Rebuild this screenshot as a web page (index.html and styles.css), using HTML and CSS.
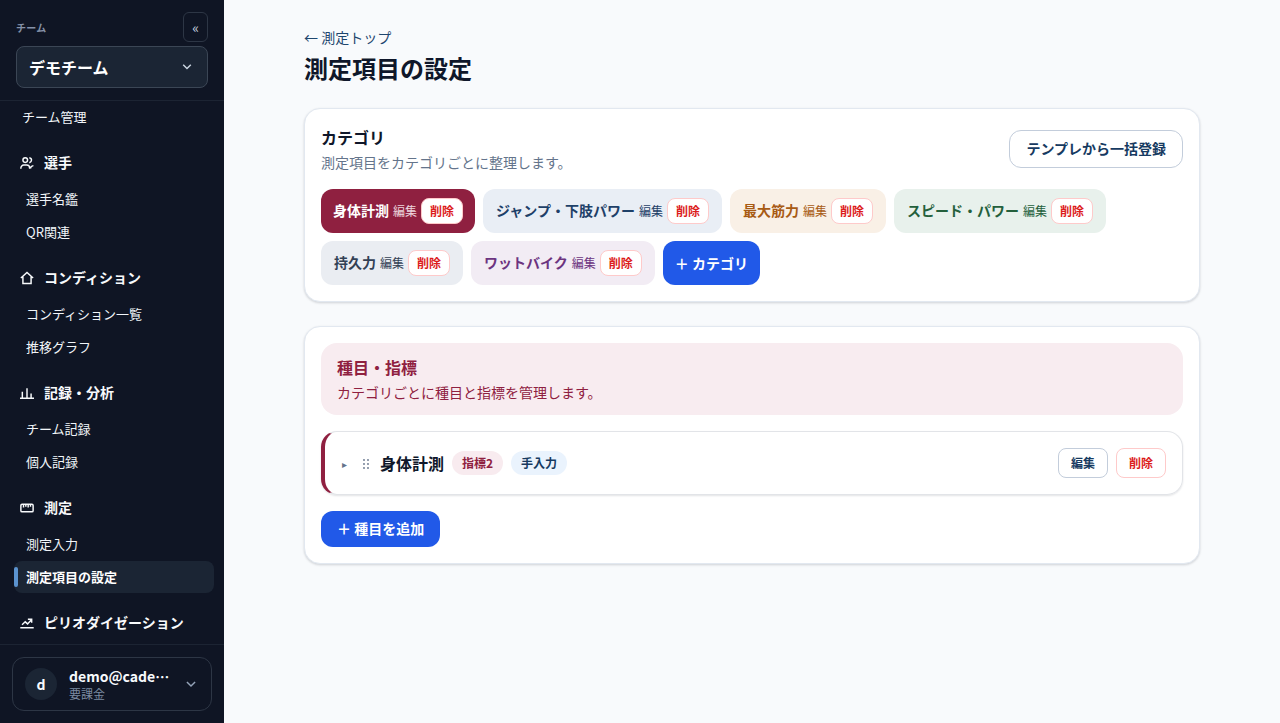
FILE: index.html
```html
<!DOCTYPE html>
<html lang="ja">
<head>
    <meta charset="UTF-8">
    <meta name="viewport" content="width=device-width, initial-scale=1.0">
    <title>測定項目の設定</title>
    <link rel="stylesheet" href="styles.css">
</head>
<body>
    <aside class="sidebar">
        <div class="sidebar-header">
            <div class="team-row">
                <span class="team-label">チーム</span>
                <button class="collapse-btn">«</button>
            </div>
            <button class="team-select">
                デモチーム
                <svg class="chevron" viewBox="0 0 24 24"><path d="m5.500 8 6.500 6.500L18.500 8"/></svg>
            </button>
        </div>

        <nav class="nav">
            <a class="nav-item nav-top" href="#">チーム管理</a>

            <div class="nav-group">
                <div class="nav-heading">
                    <svg viewBox="0 0 24 24"><circle cx="9" cy="7" r="4"/><path d="M1.500 22v-1.500a5 5 0 0 1 5-5h5a5 5 0 0 1 5 5V22M16 3c5 1 5 7 0 8.500M18 21.500c0-3 1-4.500 5-5"/></svg>
                    <span>選手</span>
                </div>
                <a class="nav-item" href="#">選手名鑑</a>
                <a class="nav-item" href="#">QR関連</a>
            </div>

            <div class="nav-group">
                <div class="nav-heading">
                    <svg viewBox="0 0 24 24"><path d="M1.500 12 12 2.500 22.500 12M5 10v11.500h14V10"/></svg>
                    <span>コンディション</span>
                </div>
                <a class="nav-item" href="#">コンディション一覧</a>
                <a class="nav-item" href="#">推移グラフ</a>
            </div>

            <div class="nav-group">
                <div class="nav-heading">
                    <svg viewBox="0 0 24 24"><path d="M0 21h24M4 21V10M12 21V4M19 21v-8"/></svg>
                    <span>記録・分析</span>
                </div>
                <a class="nav-item" href="#">チーム記録</a>
                <a class="nav-item" href="#">個人記録</a>
            </div>

            <div class="nav-group">
                <div class="nav-heading">
                    <svg viewBox="0 0 24 24"><rect x="1.500" y="5.500" width="21" height="13" rx="2"/><path d="M6 6v5M10 6v4M14 6v5M18 6v4"/></svg>
                    <span>測定</span>
                </div>
                <a class="nav-item" href="#">測定入力</a>
                <a class="nav-item active" href="#">測定項目の設定</a>
            </div>

            <div class="nav-group">
                <div class="nav-heading">
                    <svg viewBox="0 0 24 24"><path d="M0.500 20h23M3.500 15l5.500-5 4 3.500 6.500-7M13.500 5.500h6.500v6"/></svg>
                    <span>ピリオダイゼーション</span>
                </div>
            </div>
        </nav>

        <div class="sidebar-footer">
            <button class="account">
                <span class="avatar">d</span>
                <span class="account-text">
                    <span class="account-name">demo@cade…</span>
                    <span class="account-plan">要課金</span>
                </span>
                <svg class="chevron" viewBox="0 0 24 24"><path d="m5 8.500 7 7 7-7"/></svg>
            </button>
        </div>
    </aside>

    <main class="main">
        <div class="container">
            <a class="back-link" href="#">← 測定トップ</a>
            <h1>測定項目の設定</h1>

            <section class="card">
                <div class="card-header">
                    <div>
                        <h2>カテゴリ</h2>
                        <p>測定項目をカテゴリごとに整理します。</p>
                    </div>
                    <button class="template-btn">テンプレから一括登録</button>
                </div>
                <div class="chips">
                    <div class="chip chip-body"><b>身体計測</b><span>編集</span><button class="chip-delete">削除</button></div>
                    <div class="chip chip-jump"><b>ジャンプ・下肢パワー</b><span>編集</span><button class="chip-delete">削除</button></div>
                    <div class="chip chip-strength"><b>最大筋力</b><span>編集</span><button class="chip-delete">削除</button></div>
                    <div class="chip chip-speed"><b>スピード・パワー</b><span>編集</span><button class="chip-delete">削除</button></div>
                    <div class="chip chip-endurance"><b>持久力</b><span>編集</span><button class="chip-delete">削除</button></div>
                    <div class="chip chip-watt"><b>ワットバイク</b><span>編集</span><button class="chip-delete">削除</button></div>
                    <button class="add-btn add-category">＋ カテゴリ</button>
                </div>
            </section>

            <section class="card">
                <div class="section-banner">
                    <h2>種目・指標</h2>
                    <p>カテゴリごとに種目と指標を管理します。</p>
                </div>
                <div class="event">
                    <span class="event-toggle">▸</span>
                    <svg class="grip" viewBox="0 0 8 12"><circle cx="2" cy="2" r="0.900"/><circle cx="6" cy="2" r="0.900"/><circle cx="2" cy="6" r="0.900"/><circle cx="6" cy="6" r="0.900"/><circle cx="2" cy="10" r="0.900"/><circle cx="6" cy="10" r="0.900"/></svg>
                    <span class="event-name">身体計測</span>
                    <span class="badge badge-metric">指標2</span>
                    <span class="badge badge-input">手入力</span>
                    <div class="event-actions">
                        <button class="small-btn">編集</button>
                        <button class="small-btn danger">削除</button>
                    </div>
                </div>
                <button class="add-btn add-event">＋ 種目を追加</button>
            </section>
        </div>
    </main>
</body>
</html>
```
FILE: styles.css
```css
* {
    box-sizing: border-box;
}
body {
    margin: 0;
    height: 100vh;
    display: flex;
    overflow: hidden;
    background-color: #f8fafc;
    color: #0f172a;
    font-family: "Noto Sans CJK JP", sans-serif;
    font-size: 14px;
    line-height: 20px;
}
button {
    font: inherit;
    cursor: pointer;
}
a {
    text-decoration: none;
}
h1, h2, p {
    margin: 0;
}
svg {
    fill: none;
    stroke: currentColor;
    stroke-width: 2.5;
    flex-shrink: 0;
}

/* sidebar */
.sidebar {
    width: 224px;
    flex-shrink: 0;
    display: flex;
    flex-direction: column;
    background-color: #0f1524;
    color: #f8fafc;
}
.sidebar-header {
    height: 101px;
    padding: 12px 16px;
    border-bottom: 1px solid #1c2433;
    flex-shrink: 0;
}
.team-row {
    display: flex;
    align-items: center;
    justify-content: space-between;
    height: 30px;
    margin-bottom: 4px;
}
.team-label {
    padding-top: 2px;
    font-size: 10px;
    font-weight: 700;
    letter-spacing: 0.25px;
    color: #8592a8;
}
.collapse-btn {
    width: 25px;
    height: 30px;
    padding: 0;
    border: 1px solid #2d3645;
    border-radius: 6px;
    background: transparent;
    color: #cbd5e1;
    font-size: 14px;
}
.team-select {
    display: flex;
    align-items: center;
    justify-content: space-between;
    width: 100%;
    height: 42px;
    padding: 0 13px 0 12px;
    border: 1px solid #3b4655;
    border-radius: 8px;
    background-color: #1b2534;
    color: #fff;
    font-size: 16px;
    font-weight: 700;
}
.chevron {
    width: 14px;
    height: 14px;
    color: #cbd5e1;
}
.nav {
    flex: 1;
    min-height: 0;
    overflow: hidden;
    padding: 0 10px 0 14px;
}
.nav-group {
    margin-top: 12px;
}
.nav-heading {
    display: flex;
    align-items: center;
    gap: 10px;
    height: 36px;
    padding-left: 6px;
    margin-bottom: 2px;
    font-weight: 700;
}
.nav-heading span {
    padding-bottom: 2px;
}
.nav-heading svg {
    width: 14px;
    height: 14px;
}
.nav-item {
    display: flex;
    align-items: center;
    height: 32px;
    padding-left: 12px;
    margin-bottom: 1px;
    border-radius: 8px;
    color: #f1f5f9;
    font-size: 13px;
}
.nav-top {
    padding-left: 8px;
    margin-bottom: 0;
}
.nav-group .nav-item:last-child {
    margin-bottom: 0;
}
.nav-item.active {
    padding-left: 0;
    background-color: #1b2534;
    color: #fff;
    font-weight: 700;
}
.nav-item.active::before {
    content: "";
    width: 4px;
    height: 20px;
    margin-right: 8px;
    border-radius: 2px;
    background-color: #5b93cf;
}
.sidebar-footer {
    padding: 12px;
    border-top: 1px solid #1c2433;
}
.account {
    display: flex;
    align-items: center;
    width: 200px;
    height: 54px;
    padding: 0 13px 0 12px;
    border: 1px solid #2d3645;
    border-radius: 12px;
    background: transparent;
    color: #f8fafc;
    text-align: left;
}
.avatar {
    width: 32px;
    height: 32px;
    margin-right: 12px;
    border-radius: 50%;
    background-color: #1b2534;
    font-weight: 700;
    line-height: 32px;
    text-align: center;
}
.account-text {
    display: flex;
    flex-direction: column;
    flex: 1;
}
.account-name {
    padding-top: 1px;
    font-weight: 700;
    line-height: 19px;
}
.account-plan {
    color: #7c8ba1;
    font-size: 12px;
    line-height: 16px;
}
.account .chevron {
    color: #94a3b8;
}

/* main */
.main {
    flex: 1;
    padding: 27px 80px;
}
.container {
    max-width: 896px;
}
.back-link {
    display: block;
    color: #1e466e;
}
h1 {
    margin: 5px 0 24px;
    font-size: 24px;
    font-weight: 700;
    line-height: 32px;
}
.card {
    padding: 16px;
    margin-bottom: 24px;
    border: 1px solid #e2e8f0;
    border-radius: 16px;
    background-color: #fff;
    box-shadow: 0 1px 3px rgba(15, 23, 42, 0.1), 0 1px 2px rgba(15, 23, 42, 0.08);
}
.card-header {
    display: flex;
    align-items: center;
    justify-content: space-between;
    margin-bottom: 16px;
}
h2 {
    font-size: 16px;
    font-weight: 700;
    line-height: 24px;
}
.card-header p {
    margin: 3px 0 1px;
    color: #64748b;
}
.template-btn {
    height: 38px;
    padding: 0 16px 2px;
    border: 1px solid #c3cddb;
    border-radius: 12px;
    background-color: #fff;
    color: #163a61;
    font-weight: 700;
}
.chips {
    display: flex;
    flex-wrap: wrap;
    gap: 8px;
}
.chip {
    display: flex;
    align-items: center;
    gap: 4px;
    height: 44px;
    padding: 0 13px;
    border-radius: 12px;
}
.chip b {
    padding-bottom: 2px;
}
.chip span {
    font-size: 12px;
}
.chip-delete {
    height: 26px;
    padding: 0 8px;
    border: 1px solid #fecaca;
    border-radius: 8px;
    background-color: #fff;
    color: #dc1c1c;
    font-size: 12px;
    font-weight: 700;
}
.chip-body {
    padding: 0 12px;
    background-color: #8f2040;
    color: #fff;
}
.chip-body span {
    color: #ecd5dc;
}
.chip-jump {
    background-color: #e9eef5;
    color: #1e4068;
}
.chip-strength {
    background-color: #f9f0e6;
    color: #a85b14;
}
.chip-speed {
    background-color: #e8f1ec;
    color: #24603c;
}
.chip-endurance {
    background-color: #eaedf2;
    color: #334155;
}
.chip-watt {
    background-color: #f2ecf4;
    color: #6c3480;
}
.add-btn {
    border: none;
    border-radius: 12px;
    background-color: #2159e8;
    color: #fff;
    font-weight: 700;
}
.add-category {
    height: 44px;
    padding: 0 12px 1px;
}
.section-banner {
    height: 72px;
    padding: 12px 16px;
    margin-bottom: 16px;
    border-radius: 16px;
    background-color: #f8ecf0;
    color: #8f2040;
}
.section-banner p {
    margin-top: 3px;
}
.event {
    display: flex;
    align-items: center;
    height: 64px;
    padding: 0 16px 0 17px;
    margin-bottom: 16px;
    border: 1px solid #e2e4e8;
    border-left: 4px solid #8f2040;
    border-radius: 16px;
    box-shadow: 0 1px 2px rgba(15, 23, 42, 0.12);
}
.event-toggle {
    width: 20px;
    padding-top: 2px;
    color: #64748b;
    font-size: 10px;
}
.grip {
    width: 8px;
    height: 12px;
    margin: 1px 10px 0 0;
    fill: #64748b;
    stroke: none;
}
.event-name {
    margin-right: 8px;
    font-size: 16px;
    font-weight: 700;
}
.badge {
    height: 24px;
    padding: 0 10px;
    margin-right: 8px;
    border-radius: 12px;
    font-size: 12px;
    font-weight: 700;
    line-height: 24px;
}
.badge-metric {
    background-color: #f8ebef;
    color: #8f2040;
}
.badge-input {
    background-color: #eaf3fd;
    color: #163a61;
}
.event-actions {
    display: flex;
    gap: 8px;
    margin-left: auto;
}
.small-btn {
    width: 50px;
    height: 30px;
    padding: 0;
    border: 1px solid #c3cddb;
    border-radius: 8px;
    background-color: #fff;
    color: #163a61;
    font-size: 12px;
    font-weight: 700;
}
.small-btn.danger {
    border-color: #fecaca;
    color: #dc1c1c;
}
.add-event {
    display: block;
    height: 36px;
    padding: 0 16px 2px;
}
```
